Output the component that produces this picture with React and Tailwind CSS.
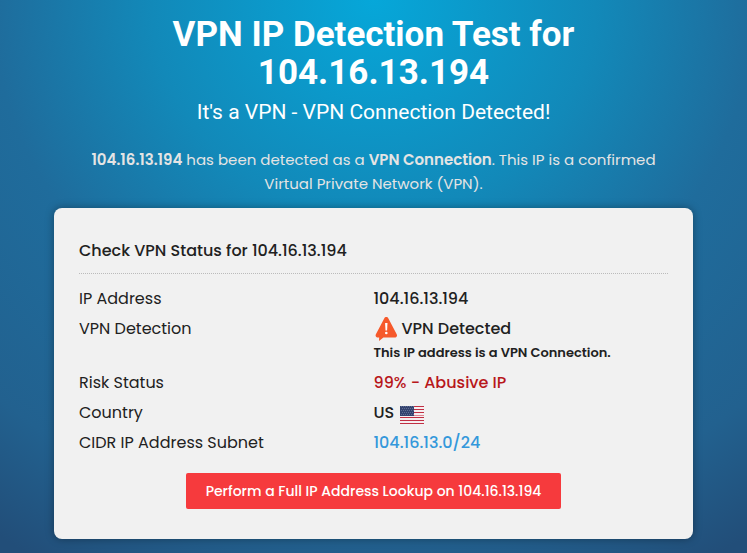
const ip = '104.16.13.194'

function WarningIcon() {
  return (
    <svg className="h-6 w-6 shrink-0" viewBox="0 0 24 24" aria-hidden="true">
      <path
        d="M10.2 1.4C11.1-.4 13.5-.4 14.4 1.4l8.3 15.9c.9 1.8-.2 3.3-2.2 3.3H9.4L5 24l.2-3.4H4.1c-2 0-3.1-1.5-2.2-3.3z"
        fill="#f6592b"
      />
      <path d="M11.1 6h2.4l-.4 7.4h-1.6z" fill="#fff" />
      <circle cx="12.3" cy="16" r="1.3" fill="#fff" />
    </svg>
  )
}

function UsFlag() {
  return (
    <svg className="mt-1 h-[18px] w-6 shrink-0" viewBox="0 0 24 18" role="img" aria-label="United States">
      <rect width="24" height="18" fill="#f6eef0" />
      {[0, 3, 6, 11, 14, 17].map((y) => (
        <rect key={y} y={y} width="24" height="1" fill="#c02f43" />
      ))}
      <rect y="9" width="24" height="1" fill="#dc8490" />
      <rect width="14" height="10" fill="#34436f" />
      {[1, 3, 5, 7, 9].map((y) => (
        <path
          key={y}
          d={`M${y % 4 === 1 ? 1 : 2} ${y - 0.5}H14`}
          stroke="#5f6d93"
          strokeWidth="1"
          strokeDasharray="1 1"
        />
      ))}
    </svg>
  )
}

const rows = [
  { label: 'IP Address', value: ip },
  {
    label: 'VPN Detection',
    value: (
      <>
        <span className="flex items-center gap-1">
          <WarningIcon />
          VPN Detected
        </span>
        <span className="block text-[13px] leading-6 font-semibold">This IP address is a VPN Connection.</span>
      </>
    ),
  },
  { label: 'Risk Status', value: <span className="text-[#b8171b]">99% - Abusive IP</span> },
  {
    label: 'Country',
    value: (
      <span className="flex items-center gap-1.5">
        US
        <UsFlag />
      </span>
    ),
  },
  {
    label: 'CIDR IP Address Subnet',
    value: (
      <a href="#subnet" className="text-[#3498db]">
        104.16.13.0/24
      </a>
    ),
  },
]

export default function App() {
  return (
    <main className="min-h-screen bg-[#224e79] bg-[radial-gradient(ellipse_85%_110%_at_50%_0%,#06a7d9_0%,#1289b9_35%,#1f6c9c_60%,#22618f_88%,#224e79_106%)] px-[54px] pt-4 pb-3.5 font-[Poppins,Inter,sans-serif]">
      <header className="text-center">
        <h1 className="mx-auto max-w-md font-[Roboto,sans-serif] text-[35px] leading-[38px] font-bold text-white">
          VPN IP Detection Test for {ip}
        </h1>
        <p className="mt-1 font-[Roboto,sans-serif] text-[21px] leading-8 text-white">
          It's a VPN - VPN Connection Detected!
        </p>
        <p className="mx-auto mt-5 max-w-[600px] text-[15px] leading-6 text-[#e4e4e4]">
          <b className="font-semibold">{ip}</b> has been detected as a <b className="font-semibold">VPN Connection</b>.
          This IP is a confirmed Virtual Private Network (VPN).
        </p>
      </header>

      <section className="mt-3 rounded-lg bg-[#f1f1f1] px-[25px] pt-[31px] pb-[30px] text-base leading-6 text-[#212121] shadow-[0_0_8px_rgba(0,0,0,0.35)]">
        <h2 className="border-b border-dotted border-[#bbb] pb-2.5 font-medium">Check VPN Status for {ip}</h2>
        <table className="mt-2.5 w-full table-fixed">
          <tbody>
            {rows.map((row) => (
              <tr key={row.label}>
                <th scope="row" className="py-[3px] text-left align-top font-normal">
                  {row.label}
                </th>
                <td className="py-[3px] align-top font-medium">{row.value}</td>
              </tr>
            ))}
          </tbody>
        </table>
        <div className="mt-[15px] text-center">
          <button
            type="button"
            className="h-9 rounded-xs bg-[#f63a3d] px-5 align-top text-sm font-medium text-white hover:bg-[#dd3033]"
          >
            Perform a Full IP Address Lookup on {ip}
          </button>
        </div>
      </section>
    </main>
  )
}
